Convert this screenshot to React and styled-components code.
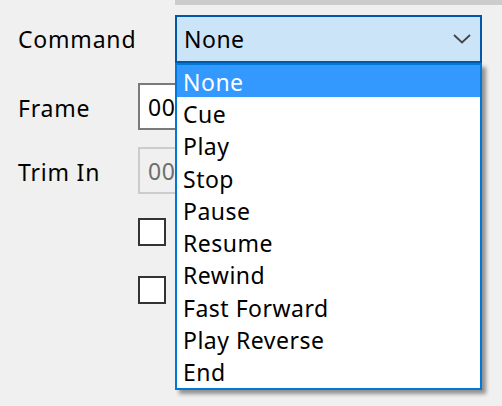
import React from 'react';
import styled, { createGlobalStyle } from 'styled-components';

const GlobalStyle = createGlobalStyle`
  html, body {
    margin: 0;
    padding: 0;
    background: #f0f0f0;
  }
  body {
    font-family: "Segoe UI", "Noto Sans", "Open Sans", sans-serif;
    font-size: 23px;
    letter-spacing: 0.5px;
    color: #000;
  }
`;

const Page = styled.div`
  position: relative;
  width: 502px;
  height: 406px;
  overflow: hidden;
  background: #f0f0f0;
`;

const TopStrip = styled.div`
  margin-left: 175px;
  height: 5px;
  background: #cccccc;
`;

const Form = styled.div`
  position: relative;
  display: flex;
  flex-direction: column;
  padding-top: 10px;
`;

const Row = styled.div`
  display: flex;
  align-items: center;
  height: ${p => p.h}px;
  margin-top: ${p => p.gap || 0}px;
`;

const Label = styled.div`
  width: ${p => p.w}px;
  padding-left: 18px;
  box-sizing: border-box;
  line-height: 1;
  letter-spacing: 0.8px;
  padding-top: ${p => p.nudge || 0}px;
`;

const Combo = styled.div`
  display: flex;
  align-items: center;
  justify-content: space-between;
  width: 307px;
  height: 48px;
  box-sizing: border-box;
  border: 2px solid #0059a8;
  background: #cce4f7;
  padding: 0 9px 0 7px;
`;

const ComboText = styled.span`
  line-height: 1;
`;

const Input = styled.div`
  display: flex;
  align-items: center;
  width: 220px;
  height: 47px;
  box-sizing: border-box;
  border: 2px solid ${p => (p.disabled ? '#cccccc' : '#7a7a7a')};
  background: ${p => (p.disabled ? '#f0f0f0' : '#ffffff')};
  color: ${p => (p.disabled ? '#6d6d6d' : '#000')};
  padding-left: 8px;
  white-space: nowrap;
`;

const CheckRow = styled.div`
  display: flex;
  align-items: center;
  padding-left: 138px;
  margin-top: ${p => p.gap}px;
`;

const Box = styled.div`
  width: 28px;
  height: 28px;
  box-sizing: border-box;
  border: 2px solid #333333;
  background: #ffffff;
`;

const Dropdown = styled.ul`
  position: absolute;
  left: 175px;
  top: 63px;
  width: 307px;
  height: 327px;
  box-sizing: border-box;
  margin: 0;
  padding: 0;
  list-style: none;
  background: #ffffff;
  border: 2px solid #0078d7;
  box-shadow: 4px 4px 4px rgba(0, 0, 0, 0.4);
`;

const Item = styled.li`
  height: 32.3px;
  display: flex;
  align-items: center;
  padding-left: 6px;
  padding-top: 2px;
  box-sizing: border-box;
  line-height: 1;
  background: ${p => (p.selected ? '#3399ff' : 'transparent')};
  color: ${p => (p.selected ? '#ffffff' : '#000')};
`;

const Chevron = () => (
  <svg width="18" height="10" viewBox="0 0 18 10">
    <polyline points="1,1 9,8.5 17,1" fill="none" stroke="#444" strokeWidth="1.8" />
  </svg>
);

const commands = [
  'None',
  'Cue',
  'Play',
  'Stop',
  'Pause',
  'Resume',
  'Rewind',
  'Fast Forward',
  'Play Reverse',
  'End'
];

const App = () => {
  return (
    <Page>
      <GlobalStyle />
      <TopStrip />
      <Form>
        <Row h={48}>
          <Label w={175}>Command</Label>
          <Combo>
            <ComboText>None</ComboText>
            <Chevron />
          </Combo>
        </Row>
        <Row h={47} gap={20}>
          <Label w={138} nudge={4}>Frame</Label>
          <Input>00:00:00:00</Input>
        </Row>
        <Row h={47} gap={17}>
          <Label w={138} nudge={4}>Trim In</Label>
          <Input disabled>00:00:00:00</Input>
        </Row>
        <CheckRow gap={24}>
          <Box />
        </CheckRow>
        <CheckRow gap={30}>
          <Box />
        </CheckRow>
      </Form>
      <Dropdown>
        {commands.map((c, i) => (
          <Item key={c} selected={i === 0}>
            {c}
          </Item>
        ))}
      </Dropdown>
    </Page>
  );
};

export default App;
